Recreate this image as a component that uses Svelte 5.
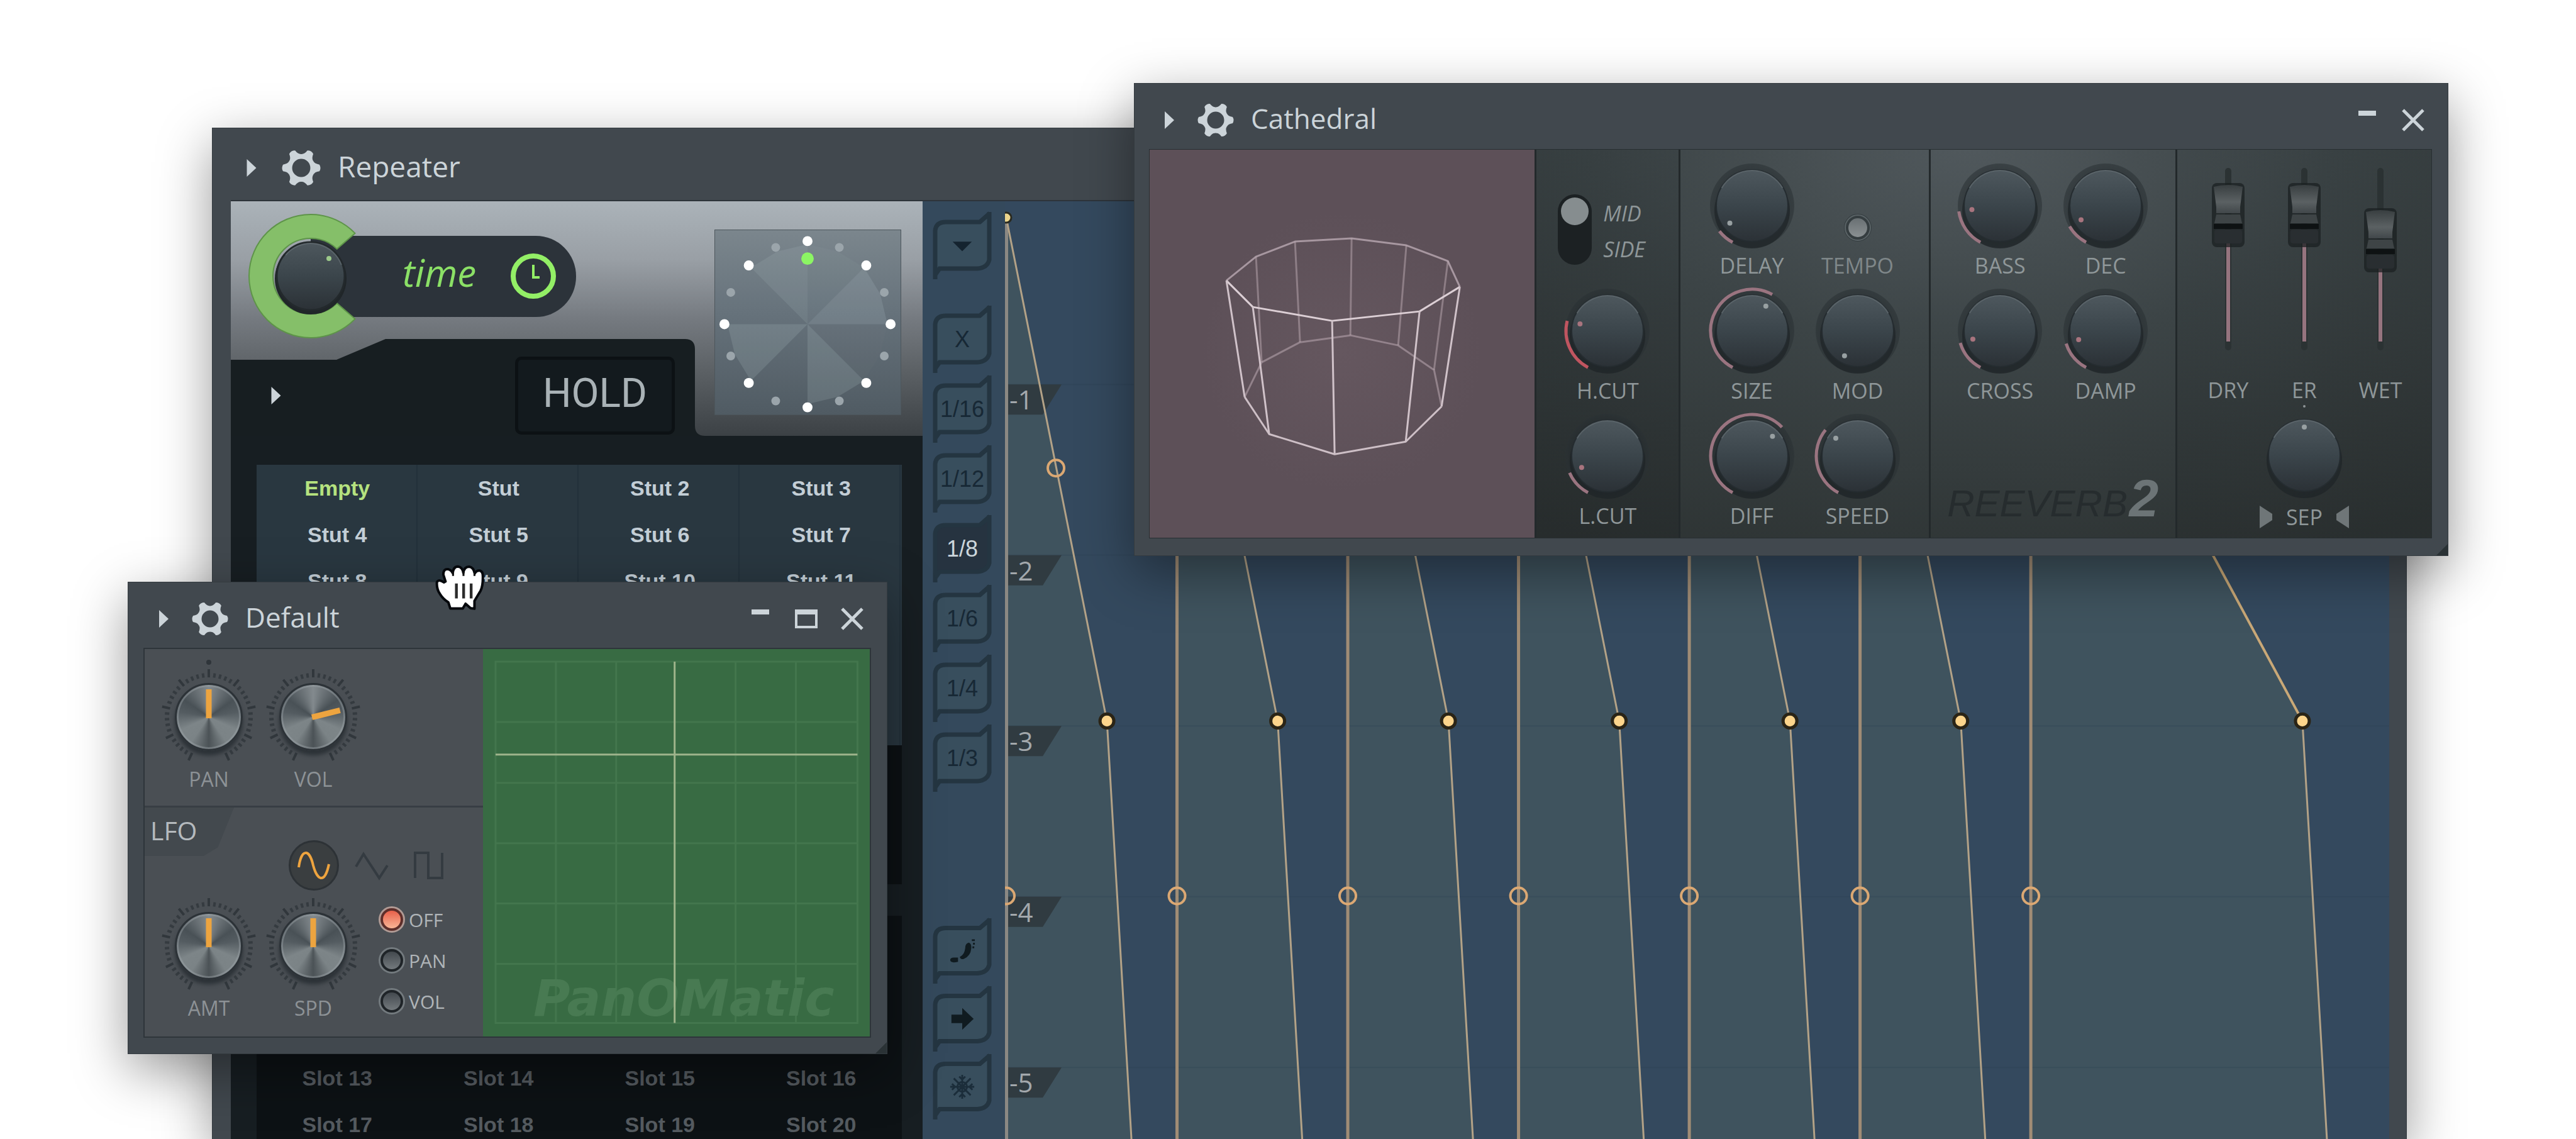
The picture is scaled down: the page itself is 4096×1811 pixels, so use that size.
<script>
  const presets = ['Empty', 'Stut', 'Stut 2', 'Stut 3', 'Stut 4', 'Stut 5', 'Stut 6', 'Stut 7', 'Stut 8', 'Stut 9', 'Stut 10', 'Stut 11'];
  const slots = Array.from({ length: 8 }, (_, i) => `Slot ${i + 13}`);
  const divisions = ['X', '1/16', '1/12', '1/8', '1/6', '1/4', '1/3'];
  const tools = ['slide', 'arrow', 'freeze'];
  let preset = $state('Empty');
  let division = $state('1/8');
  let lfoTarget = $state('OFF');
  let wave = $state('sine');

  const rad = (deg) => (deg * Math.PI) / 180;
  const px = (r, deg) => r * Math.sin(rad(deg));
  const py = (r, deg) => -r * Math.cos(rad(deg));
  const arc = (r, a, b) =>
    `M${px(r, a)} ${py(r, a)}A${r} ${r} 0 ${b - a > 180 ? 1 : 0} 1 ${px(r, b)} ${py(r, b)}`;

  const clockDots = Array.from({ length: 16 }, (_, i) => ({
    x: px(133, i * 22.5), y: py(133, i * 22.5), on: i % 2 === 0
  }));
  const wedgeShade = [0.04, 0.13, 0.02, 0.14, 0, 0.14, 0, 0.1];
  const wedges = wedgeShade.map((o, i) => ({
    o, d: `M0 0L${px(128, i * 45)} ${py(128, i * 45)}L${px(126, i * 45 + 22.5)} ${py(126, i * 45 + 22.5)}L${px(128, i * 45 + 45)} ${py(128, i * 45 + 45)}Z`
  }));
  const ticks = Array.from({ length: 41 }, (_, i) => ({ a: -155 + i * 7.75, major: i % 5 === 0 }));

  // Envelope geometry, in the units of the graph's own viewBox
  const step = 271.4;
  const starts = [0, 1, 2, 3, 4, 5, 6].map((i) => 2 + i * step);
  const dots = [0, 1, 2, 3, 4, 5].map((i) => 162 + i * step).concat(2062);
  const shape = dots
    .map((d, i) => `M${starts[i]} 26L${d} 826L${d + 39} 1491H${starts[i]}Z`).join('');
  const line = dots.map((d, i) => `M${starts[i]} 26L${d} 826L${d + 39} 1491`).join('');
  const marks = [1, 2, 3, 4, 5].map((n) => ({ n, y: 291 + (n - 1) * 271.4 }));
</script>

{#snippet bar(title, maximize, closable)}
  <header class="bar">
    <button class="disclose" aria-label="Expand {title}">
      <svg viewBox="0 0 16 28"><path d="M0 0L15 14L0 28Z" /></svg>
    </button>
    <button class="gear" aria-label="{title} options">
      <svg viewBox="-28 -28 56 56">
        <circle r="17" fill="none" stroke="currentColor" stroke-width="7" />
        {#each [30, 90, 150, 210, 270, 330] as a}
          <path d="M-10 -18Q-6 -20 -5 -27Q0 -30 5 -27Q6 -20 10 -18Z" transform="rotate({a})" />
        {/each}
      </svg>
    </button>
    <h2>{title}</h2>
    {#if closable}
      <div class="controls">
        <button aria-label="Minimize"><svg viewBox="0 0 36 36"><path d="M4 3H32V11H4Z" /></svg></button>
        {#if maximize}
          <button aria-label="Maximize"><svg viewBox="0 0 36 36"><path fill-rule="evenodd" d="M0 3H36V33H0ZM4 11V29H32V11Z" /></svg></button>
        {/if}
        <button aria-label="Close"><svg viewBox="0 0 36 36"><path d="M2 2L34 34M34 2L2 34" fill="none" stroke="currentColor" stroke-width="5" /></svg></button>
      </div>
    {/if}
  </header>
{/snippet}

{#snippet dial(label, angle, hot, bare)}
  <label class="dial">
    <span class="dial-face">
      <svg viewBox="-80 -80 160 160">
        {#if !bare}<circle r="67" fill="url(#well)" opacity="0.55" />{/if}
        <circle cy="8" r="60" fill="#1e2427" opacity="0.7" />
        <circle r="57" fill="url(#cap)" stroke="#252c30" stroke-width="2" />
        <path d={arc(56, -60, 60)} fill="none" stroke="#6d767b" stroke-width="2" opacity="0.6" />
        {#if angle > -150 && !bare}
          <path d={arc(66, -152, angle)} fill="none" stroke={hot ? '#c05560' : '#9a7480'} stroke-width="5" />
        {/if}
        {#if bare}<circle cy="-78" r="2" fill="#8d9496" />{/if}
        <circle cx={px(45, angle)} cy={py(45, angle)} r="4" fill={hot || angle < -90 && angle > -125 ? '#a8747e' : '#98a0a2'} />
      </svg>
      <input type="range" min="-152" max="152" value={angle} />
    </span>
    <span class="dial-name">{#if bare}<svg class="tri" viewBox="0 0 20 36"><path d="M0 0L20 13V23L0 36Z" /></svg>{/if}{label}{#if bare}<svg class="tri" viewBox="0 0 20 36"><path d="M20 0L0 13V23L20 36Z" /></svg>{/if}</span>
  </label>
{/snippet}

{#snippet fader(label, drop)}
  <label class="fader">
    <span class="fader-face">
      <svg viewBox="0 0 70 358">
        <rect x="30" y="20" width="10" height="290" rx="5" fill="#2b3233" />
        <path d="M35 {120 + drop}V296" stroke="#96747f" stroke-width="6" />
        <g transform="translate(0 {drop})">
          <rect x="9" y="44" width="52" height="102" rx="8" fill="#1b2022" opacity="0.75" />
          <path d="M12 50Q35 44 58 50L54 82V92H16V82Z" fill="url(#grip)" />
          <path d="M16 94H54L57 108H13Z" fill="#3e4446" />
          <rect x="12" y="109" width="46" height="8" fill="#0e1213" />
          <rect x="13" y="118" width="44" height="22" rx="4" fill="#292e31" />
        </g>
      </svg>
      <input type="range" min="0" max="100" value={100 - drop} />
    </span>
    <span class="dial-name">{label}</span>
  </label>
{/snippet}

{#snippet metal(label, angle, dot)}
  <label class="metal">
    <span class="metal-face">
      <svg viewBox="-76 -76 152 152">
        {#each ticks as t}
          <path d="M0 {t.major ? -76 : -70}V-63" transform="rotate({t.a})" stroke="#2f353a" stroke-width="4" opacity={t.major ? 0.9 : 0.75} />
        {/each}
        {#if dot}<circle cy="-87" r="4" fill="#2f353a" />{/if}
      </svg>
      <span class="metal-cap"></span>
      <svg class="over" viewBox="-76 -76 152 152">
        <path d="M0 2V-44" transform="rotate({angle})" stroke="#eda43f" stroke-width="9" />
      </svg>
      <input type="range" min="-155" max="155" value={angle} />
    </span>
    <span class="metal-name">{label}</span>
  </label>
{/snippet}

<svg class="defs" aria-hidden="true">
  <defs>
    <linearGradient id="cap" x1="0" y1="0" x2="0" y2="1">
      <stop offset="0" stop-color="#4e585e" /><stop offset="0.5" stop-color="#3b454b" /><stop offset="1" stop-color="#2b3136" />
    </linearGradient>
    <radialGradient id="well"><stop offset="0.8" stop-color="#23292c" /><stop offset="1" stop-color="#2a3134" /></radialGradient>
    <linearGradient id="grip" x1="0" y1="0" x2="0" y2="1">
      <stop offset="0" stop-color="#383e40" /><stop offset="0.6" stop-color="#5b6163" /><stop offset="1" stop-color="#41474a" />
    </linearGradient>
  </defs>
</svg>

<main class="desktop">
  <section class="window repeater">
    {@render bar('Repeater', false, false)}
    <div class="rp-body">
      <div class="rp-left">
        <div class="rp-head">
          <svg class="cut" viewBox="0 0 1100 373" preserveAspectRatio="none"><path d="M0 252H168L246 219H722Q738 219 738 235V357Q738 373 754 373H0Z" fill="#171e21" /></svg>
          <div class="rp-main">
            <div class="time">
              <label class="time-knob">
                <svg viewBox="-100 -100 200 200">
                  <path d="M{px(98, 46)} {py(98, 46)}A98 98 0 1 0 {px(98, 134)} {py(98, 134)}L{px(60, 136)} {py(60, 136)}A60 60 0 1 1 {px(60, 44)} {py(60, 44)}Z" fill="#85bf69" stroke="#5e9449" stroke-width="2" />
                  <circle cy="4" r="57" fill="#202629" />
                  <circle r="54" fill="url(#cap)" stroke="#23292c" stroke-width="3" />
                  <path d={arc(52, -50, 70)} fill="none" stroke="#717b81" stroke-width="2" opacity="0.5" />
                  <circle cx="29" cy="-28" r="4" fill="#9cc98a" />
                </svg>
                <input type="range" aria-label="Time amount" value="50" />
              </label>
              <button class="pill">
                <span>time</span>
                <svg viewBox="-37 -37 74 74"><circle r="32" fill="none" stroke="#93ef66" stroke-width="8" /><path d="M0 -18V2H10" fill="none" stroke="#93ef66" stroke-width="4" /></svg>
              </button>
            </div>
            <div class="hold-row">
              <button class="disclose" aria-label="Preset menu"><svg viewBox="0 0 16 28"><path d="M0 0L15 14L0 28Z" /></svg></button>
              <button class="hold">HOLD</button>
            </div>
          </div>
          <div class="clock">
            <svg viewBox="-148 -150 297 294">
              {#each wedges as w}<path d={w.d} fill="#cfe0e4" opacity={w.o} />{/each}
              {#each clockDots as d}<circle cx={d.x} cy={d.y} r={d.on ? 8 : 7} fill={d.on ? '#fff' : '#9ba5ab'} />{/each}
              <circle cy="-105" r="10" fill="#8cf564" />
            </svg>
          </div>
        </div>
        <div class="grid presets">
          {#each presets as p}
            <button class:active={preset === p} onclick={() => (preset = p)}>{p}</button>
          {/each}
        </div>
        <div class="grid spare"></div>
        <div class="grid slots">
          {#each slots as s}<button>{s}</button>{/each}
        </div>
      </div>
      <nav class="tabs">
        <button class="tab menu" aria-label="Menu">
          {@render tabFrame()}
          <svg class="glyph" viewBox="0 0 44 44"><path d="M6 15H38L22 31Z" fill="#14232f" /></svg>
        </button>
        {#each divisions as d}
          <button class="tab" class:on={division === d} onclick={() => (division = d)}>
            {@render tabFrame()}<span>{d}</span>
          </button>
        {/each}
        <div class="tab-gap"></div>
        {#each tools as t}
          <button class="tab tool" aria-label={t}>
            {@render tabFrame()}
            <svg class="glyph" viewBox="0 0 44 44">
              {#if t === 'slide'}
                <path d="M2 37Q2 33 8 33H15V40Q2 43 2 37ZM18 32Q26 28 27 17Q27 9 33 8Q38 10 37 18Q36 30 25 35Q19 37 18 32Z" fill="#101b20" />
                <path d="M38 4H43M40 10H43M39 16H42" stroke="#101b20" stroke-width="3" />
              {:else if t === 'arrow'}
                <path d="M4 15H22V4L41 22L22 40V29H4Z" fill="#101b20" />
              {:else}
                <path d="M22 2V42M2 22H42M8 8L36 36M36 8L8 36M17 5L22 10L27 5M17 39L22 34L27 39M5 17L10 22L5 27M39 17L34 22L39 27" fill="none" stroke="#1b2d3a" stroke-width="3" />
                <circle cx="22" cy="22" r="8" fill="none" stroke="#1b2d3a" stroke-width="3" />
              {/if}
            </svg>
          </button>
        {/each}
      </nav>
      <div class="graph">
        <svg viewBox="0 0 2200 1491" preserveAspectRatio="xMinYMin slice">
          <path d={shape} fill="#3f535e" />
          {#each marks as m}
            <path d="M0 {m.y}H2200" stroke="#2c4254" stroke-width="2" opacity="0.3" />
            <path d="M4 {m.y}H90L60 {m.y + 48}H4Z" fill="#303b41" />
            <text x="7" y={m.y + 40}>-{m.n}</text>
          {/each}
          <path d="M2 26V1491" stroke="#8b8883" stroke-width="6" />
          {#each starts.slice(1) as s}<path d="M{s} 26V1491" stroke="#a08c75" stroke-width="5" />{/each}
          <path d={line} fill="none" stroke="#b3a287" stroke-width="3" />
          <path d="M{starts[6]} 26L2062 826" stroke="#c9a877" stroke-width="4" />
          <circle cx="2" cy="26" r="8" fill="#ecd58c" stroke="#2a2a20" stroke-width="3" />
          {#each dots as d}<circle cx={d} cy="826" r="11" fill="#fdd58c" stroke="#2a2416" stroke-width="5" />{/each}
          <circle cx="81" cy="424" r="13" fill="none" stroke="#dba873" stroke-width="4" />
          {#each starts as s}<circle cx={s} cy="1104" r="13" fill="none" stroke="#dba873" stroke-width="4" />{/each}
        </svg>
      </div>
    </div>
  </section>

  <section class="window cathedral">
    {@render bar('Cathedral', false, true)}
    <div class="cv-body">
      <div class="room">
        <svg viewBox="0 0 612 617">
          <g fill="none" stroke="#bba9b2" stroke-width="3" stroke-linejoin="round">
            <path d="M122 208L169 170L231 146L321 141L408 152L474 177L493 218" stroke="#a797a0" />
            <path d="M169 170L178 338M231 146L239 306M321 141L319 295M408 152L395 311M474 177L452 350" opacity="0.5" />
            <path d="M151 393L178 338L239 306L319 295L395 311L452 350L464 408" opacity="0.55" />
            <path d="M122 208L164 250L290 272L429 257L493 218" stroke="#dccfd5" />
            <path d="M122 208L151 393M164 250L190 452M290 272L294 484M429 257L407 464M493 218L464 408" stroke="#d0c2c9" />
            <path d="M151 393L190 452L294 484L407 464L464 408" stroke="#cdbfc6" />
          </g>
        </svg>
      </div>
      <div class="col narrow">
        <div class="ms">
          <label class="toggle"><input type="checkbox" checked aria-label="Mid / Side" /><i></i></label>
          <div class="ms-text"><span>MID</span><span>SIDE</span></div>
        </div>
        {@render dial('H.CUT', -76, true, false)}
        {@render dial('L.CUT', -114, false, false)}
      </div>
      <div class="col pair">
        {@render dial('DELAY', -128, false, false)}
        <button class="tempo"><i></i><span>TEMPO</span></button>
        {@render dial('SIZE', 29, false, false)}
        {@render dial('MOD', -152, false, false)}
        {@render dial('DIFF', 46, false, false)}
        {@render dial('SPEED', -51, false, false)}
      </div>
      <div class="col pair">
        {@render dial('BASS', -98, false, false)}
        {@render dial('DEC', -120, false, false)}
        {@render dial('CROSS', -107, false, false)}
        {@render dial('DAMP', -108, false, false)}
        <div class="logo"><span>REEVERB</span><b>2</b></div>
      </div>
      <div class="col mix">
        <div class="faders">
          {@render fader('DRY', 0)}
          {@render fader('ER', 0)}
          {@render fader('WET', 40)}
        </div>
        {@render dial('SEP', 0, false, true)}
      </div>
    </div>
    <i class="grip"></i>
  </section>

  <section class="window default">
    {@render bar('Default', true, true)}
    <div class="pm-body">
      <div class="pm-left">
        <div class="pm-knobs">
          {@render metal('PAN', 0, true)}
          {@render metal('VOL', 76, false)}
        </div>
        <div class="lfo">
          <div class="lfo-head">
            <h3>LFO</h3>
            {#each ['sine', 'triangle', 'square'] as w}
              <button class="wave" class:on={wave === w} aria-label={w} onclick={() => (wave = w)}>
                <svg viewBox="-26 -26 52 52">
                  {#if w === 'sine'}<path d="M-24 3C-20 -27 -7 -27 -1 0C6 26 18 28 24 -2" />
                  {:else if w === 'triangle'}<path d="M-25 2L-13 -18L12 20L25 0" />
                  {:else}<path d="M-23 20V-20H-2V20H20V-20" />{/if}
                </svg>
              </button>
            {/each}
          </div>
          <div class="lfo-row">
            {@render metal('AMT', 0, false)}
            {@render metal('SPD', 0, false)}
            <fieldset>
              {#each ['OFF', 'PAN', 'VOL'] as t}
                <label><input type="radio" name="lfo" value={t} bind:group={lfoTarget} />{t}</label>
              {/each}
            </fieldset>
          </div>
        </div>
      </div>
      <div class="pad">
        <svg viewBox="0 0 616 617" preserveAspectRatio="none">
          <path d="M20 20H596V595H20ZM116 20V595M212 20V595M402 20V595M498 20V595M20 116H596M20 213H596M20 309H596M20 405H596M20 501H596" fill="none" stroke="#43764d" stroke-width="3" />
          <text x="80" y="584">PanOMatic</text>
          <path d="M305 20V595M20 168H596" stroke="#9fb48c" stroke-width="3" />
        </svg>
      </div>
    </div>
    <i class="grip"></i>
  </section>

  <svg class="cursor" viewBox="110 80 360 330" aria-hidden="true">
    <path d="M126 204Q140 180 176 206L188 200L172 150Q172 106 208 112Q232 120 240 140Q244 92 278 92Q310 96 316 138Q322 94 358 94Q388 98 398 142Q410 120 434 122Q456 128 456 160Q458 230 440 266L396 340V396L368 392L332 360L312 394H222L208 350Q170 326 148 290Q122 254 126 204Z" fill="#fff" stroke="#05080c" stroke-width="18" stroke-linejoin="round" />
    <path d="M242 130V160M317 130V160M396 136V160" stroke="#111" stroke-width="14" />
    <path d="M266 214V322M318 214V322M372 214V322" stroke="#2b2b2b" stroke-width="20" />
  </svg>
</main>

{#snippet tabFrame()}
  <svg class="frame" viewBox="0 0 96 111" preserveAspectRatio="none">
    <path class="fill" d="M4 106V32Q6 18 22 18H76L92 6V78Q88 91 72 92H14Z" />
    <path class="stroke" d="M5 109V32Q6 18 22 18H76L92 4M91 2V78Q88 91 72 92H12L5 102" />
  </svg>
{/snippet}

<style>
  :global(body) { margin: 0; background: #fff; }
  * { box-sizing: border-box; }
  button { padding: 0; border: 0; background: none; color: inherit; font: inherit; }
  svg { display: block; fill: currentColor; }
  .defs { position: absolute; width: 0; height: 0; }
  .desktop { position: relative; width: 100%; height: 100vh; min-height: 1200px; overflow: hidden; font-family: 'Open Sans', 'Noto Sans', sans-serif; color: #ccd4d9; }
  .window { position: absolute; display: flex; flex-direction: column; background: #41484e; border: 1px solid #343b40; box-shadow: 0 26px 80px rgba(0, 0, 0, 0.4); }
  .repeater { left: 337px; right: 269px; top: 203px; bottom: 0; padding: 0 27px 0 29px; border-bottom: 0; }
  .cathedral { left: 1803px; top: 132px; width: 2090px; padding: 0 25px 27px 23px; }
  .default { left: 203px; top: 925px; width: 1208px; padding: 0 25px 25px 24px; }
  .grip { position: absolute; right: 0; bottom: 0; border: 9px solid #2a3235; border-top-color: transparent; border-left-color: transparent; }

  .bar { display: flex; align-items: center; height: 104px; padding: 12px 0 0 25px; }
  .disclose svg { width: 16px; height: 28px; }
  .gear { margin-left: 37px; }
  .gear svg { width: 56px; height: 56px; overflow: visible; }
  h2 { margin: 0 0 7px 28px; font-size: 44px; line-height: 60px; font-weight: 400; }
  .repeater .bar { height: 114px; }
  .repeater .disclose svg { width: 17px; }
  .repeater .gear { margin-left: 40px; }
  .repeater .gear svg { width: 60px; height: 60px; }
  .repeater h2 { font-size: 46px; }
  .controls { display: flex; margin-left: auto; margin-right: -6px; }
  .controls button { display: grid; place-items: center; width: 73px; height: 60px; }
  .controls svg { width: 36px; height: 36px; }

  .rp-body { flex: 1; min-height: 0; display: grid; grid-template-columns: 1100px 131px 1fr; border-top: 2px solid #2d343a; }
  .rp-left { background: #171e22; overflow: hidden; }
  .rp-head { position: relative; display: grid; grid-template-columns: 706px 297px; column-gap: 63px; height: 373px; background: linear-gradient(#abb3b9, #999fa5 25%, #757a80 50%, #5c6165 72%, #3c4145); }
  .cut { position: absolute; inset: 0; width: 100%; height: 100%; }
  .rp-main, .clock { position: relative; }
  .time { display: flex; align-items: center; padding: 19px 0 0 27px; }
  .time-knob { position: relative; z-index: 1; width: 200px; }
  .time-knob svg { width: 200px; height: 200px; }
  input[type='range'] { position: absolute; inset: 0; width: 100%; height: 100%; margin: 0; opacity: 0; }
  .pill { display: flex; align-items: center; justify-content: space-between; width: 422px; height: 129px; margin-left: -100px; padding: 0 31px 0 146px; border-radius: 0 64px 64px 0; background: #2c333a; color: #8be066; font-style: italic; font-size: 60px; }
  .pill span { padding-bottom: 12px; }
  .pill svg { width: 74px; height: 74px; }
  .hold-row { display: flex; align-items: center; justify-content: space-between; padding: 28px 0 0 64px; }
  .hold { width: 254px; height: 124px; padding-bottom: 8px; border-radius: 10px; border: 5px solid #0c1114; background: #131a1e; color: #a9b2b6; font-family: Roboto, sans-serif; font-size: 64px; }
  .clock { margin-top: 45px; height: 295px; background: linear-gradient(#7b868d, #66727b 45%, #505b63); border: 1px solid #4c565c; }
  .clock svg { width: 100%; height: 100%; }
  .grid { display: grid; grid-template-columns: repeat(4, 1fr); grid-auto-rows: 74px; margin: 0 33px 0 41px; align-content: start; font-family: 'Liberation Sans', Arial, sans-serif; font-weight: 700; font-size: 34px; }
  .presets { min-height: 446px; margin-top: 46px; background: linear-gradient(90deg, transparent 254px, #22303a 254px, #22303a 256px, transparent 256px) 0 0 / 256px 100%, #293740; color: #c3ced6; }
  .presets .active { color: #b5e27f; }
  .spare { min-height: 221px; background: #0c1114; }
  .slots { margin-top: 50px; padding-top: 221px; background: #0d1215; color: #555b60; }

  .tabs { display: flex; flex-direction: column; padding: 15px 0 0 15px; background: #34495c; font-family: 'Liberation Sans', Arial, sans-serif; font-size: 36px; }
  .tab { position: relative; display: grid; place-items: center; flex: none; width: 96px; height: 111px; color: #172835; }
  .tab.menu { margin-bottom: 38px; }
  .tab.tool { height: 108px; }
  .tab-gap { height: 197px; flex: none; }
  .tab span, .glyph { position: relative; }
  .glyph { width: 42px; height: 42px; }
  .frame { position: absolute; inset: 0; width: 100%; height: 100%; }
  .frame .fill { fill: #384e5d; }
  .frame .stroke { fill: none; stroke: #243541; stroke-width: 7; }
  .on .fill { fill: #263340; }
  .tab.on { color: #ccd6dc; }

  .graph { background: #34495e; overflow: hidden; }
  .graph svg { width: 100%; height: 100%; }
  .graph text { font: 42px 'Open Sans', sans-serif; fill: #a3a8ac; }

  .cv-body { display: grid; grid-template-columns: 612fr 229fr 397fr 392fr 407fr; height: 619px; border: 1px solid #272e31; background: radial-gradient(ellipse 1300px 700px at 1300px 0, #50585c, #3c4446 45%, #2d3333); }
  .room { background: radial-gradient(circle at 50% 52%, #65575f, #5d5058 50%); }
  .room svg { width: 100%; height: 100%; }
  .col { border-left: 3px solid #23292b; padding-top: 9px; }
  .narrow { display: flex; flex-direction: column; align-items: center; background: linear-gradient(rgba(30, 38, 40, 0.15), rgba(30, 34, 35, 0.4)); }
  .pair { display: grid; grid-template-columns: 168px 168px; grid-auto-rows: 199px; justify-content: center; align-content: start; }
  .dial { display: flex; flex-direction: column; align-items: center; height: 199px; }
  .dial-face { position: relative; width: 160px; height: 160px; }
  .dial-face svg { width: 160px; height: 160px; }
  .dial-name { display: flex; align-items: center; gap: 22px; font-size: 34px; line-height: 30px; color: #8f9799; }
  .tri { width: 20px; height: 36px; color: #6f7678; }
  .ms { display: flex; align-items: flex-start; align-self: start; gap: 18px; height: 199px; padding: 62px 0 0 34px; }
  .toggle { width: 54px; height: 112px; padding: 5px; border-radius: 27px; background: #1c2123; }
  .toggle input { position: absolute; opacity: 0; }
  .toggle i { display: block; width: 44px; height: 44px; border-radius: 50%; background: #868d8f; }
  .ms-text { display: flex; flex-direction: column; gap: 17px; margin-top: 10px; font-style: italic; font-size: 34px; line-height: 40px; color: #8f9799; }
  .tempo { display: flex; flex-direction: column; align-items: center; justify-content: space-between; height: 190px; padding-top: 93px; font-size: 34px; line-height: 30px; color: #7f8789; }
  .tempo i { width: 44px; height: 44px; border-radius: 50%; border: 7px solid #353d40; outline: 2px solid #5a6366; outline-offset: -3px; background: linear-gradient(#697073, #8a9092); }
  .logo { grid-column: span 2; display: flex; align-items: baseline; justify-content: space-between; height: 199px; padding: 102px 0 0; font-family: 'Liberation Sans', sans-serif; font-style: italic; font-size: 60px; line-height: 90px; color: #262c2e; }
  .logo b { font-size: 84px; color: #6c7476; }
  .mix { display: flex; flex-direction: column; align-items: center; background: linear-gradient(rgba(30, 38, 40, 0.1), rgba(30, 34, 35, 0.25)); }
  .faders { display: grid; grid-template-columns: repeat(3, 121px); height: 397px; }
  .fader { display: flex; flex-direction: column; align-items: center; }
  .fader-face { position: relative; width: 70px; height: 358px; }
  .fader-face svg { width: 70px; height: 358px; }

  .pm-body { display: grid; grid-template-columns: 539fr 617fr; height: 620px; border: 2px solid #2e353a; background: #4a4f54; }
  .pm-left { display: flex; flex-direction: column; }
  .pm-knobs { display: flex; height: 252px; padding: 32px 0 0 19px; border-bottom: 3px solid #383e44; }
  .metal { display: flex; flex-direction: column; align-items: center; width: 166px; }
  .metal-face { position: relative; display: grid; place-items: center; width: 152px; height: 152px; }
  .metal-face > svg { width: 152px; height: 152px; overflow: visible; grid-area: 1 / 1; }
  .metal-face .over { z-index: 1; }
  .metal-cap { grid-area: 1 / 1; width: 108px; height: 108px; border-radius: 50%; border: 3px solid #2c3237; background: conic-gradient(#838a8e, #495156 55deg, #545c61 80deg, #7d8588 115deg, #7b8386 145deg, #4b5256 180deg, #7b8386 215deg, #7d8588 245deg, #545c61 280deg, #495156 305deg, #838a8e); box-shadow: inset 0 0 0 3px rgba(160, 168, 172, 0.4), 0 7px 6px #2c3237; }
  .metal-name { margin-top: 3px; font-size: 32px; line-height: 40px; color: #8d9296; }
  .lfo-head { display: grid; grid-template-columns: 223px 92px 92px 92px; height: 140px; align-items: center; }
  h3 { align-self: start; width: 142px; height: 77px; margin: 0; padding-left: 9px; font-size: 41px; line-height: 72px; font-weight: 400; color: #b5babe; background: #43494e; clip-path: polygon(0 0, 100% 0, 82% 82%, 66% 100%, 0 100%); }
  .wave { display: grid; place-items: center; justify-self: center; width: 80px; height: 80px; margin-top: 44px; border-radius: 50%; color: #343b41; }
  .wave svg { width: 52px; height: 52px; overflow: visible; }
  .wave path { fill: none; stroke: currentColor; stroke-width: 4; }
  .wave.on { background: #3a3e40; border: 3px solid #2d3236; color: #eea43f; }
  .lfo-row { display: flex; padding-left: 19px; margin-top: 4px; }
  fieldset { display: flex; flex-direction: column; gap: 5px; margin: 4px 0 0 23px; padding: 0; border: 0; }
  fieldset label { display: flex; align-items: center; gap: 8px; height: 60px; font-size: 30px; color: #b0b5b8; }
  fieldset input { appearance: none; width: 38px; height: 38px; margin: 0; border-radius: 50%; border: 5px solid #1f2428; outline: 3px solid #737a7e; outline-offset: -1px; background: linear-gradient(#43494e, #73797d); }
  fieldset input:checked { border-color: #5e2e2a; outline-color: #b09a94; background: linear-gradient(#e8604a, #f9b596); }
  .pad { background: #386b43; }
  .pad svg { width: 100%; height: 100%; }
  .pad text { font: italic 700 80px 'DejaVu Sans', sans-serif; fill: #487a52; }
  .cursor { position: absolute; left: 691px; top: 898px; width: 80px; height: 73px; }
</style>
